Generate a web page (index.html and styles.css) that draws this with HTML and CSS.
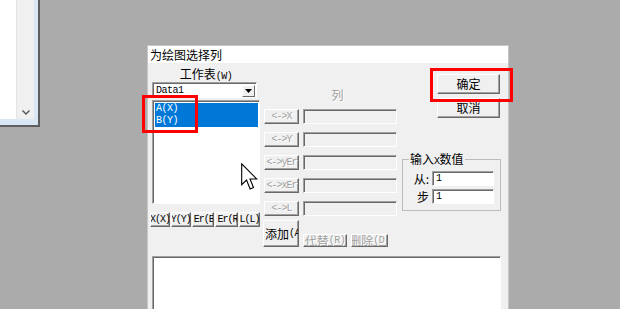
FILE: index.html
```html
<!DOCTYPE html>
<html lang="zh-CN">
<head>
    <meta charset="UTF-8">
    <title>为绘图选择列</title>
    <link rel="stylesheet" href="styles.css">
</head>
<body>
<div class="desk">
    <div class="bgwin">
        <div class="bgwin-in">
            <div class="bgwin-view"></div>
            <div class="bgwin-bar">
                <svg class="chev" width="8" height="5" viewBox="0 0 8 5"><polyline points="0.5,0.5 4,4 7.5,0.5" fill="none" stroke="#555" stroke-width="1.4"/></svg>
            </div>
        </div>
    </div>

    <div class="dlg">
        <div class="dlg-title">为绘图选择列</div>
        <div class="dlg-body">
            <div class="cols">
                <div class="col-left">
                    <div class="cap">工作表<span class="k">(W)</span></div>
                    <div class="combo">
                        <span class="mono">Data1</span>
                        <span class="combo-btn"><svg width="7" height="4" viewBox="0 0 7 4"><polygon points="0,0 7,0 3.5,4" fill="#000"/></svg></span>
                    </div>
                    <div class="list">
                        <div class="item sel">A(X)</div>
                        <div class="item sel">B(Y)</div>
                    </div>
                    <div class="minis">
                        <button class="btn mini w20">X(X)</button>
                        <button class="btn mini w20">Y(Y)</button>
                        <button class="btn mini w23 left">Er(E)</button>
                        <button class="btn mini w23 left">Er(R)</button>
                        <button class="btn mini w21">L(L)</button>
                    </div>
                </div>

                <div class="col-mid">
                    <div class="cap dis col-cap">列</div>
                    <div class="row"><button class="btn arrow dis">&lt;-&gt;X</button><span class="field dis"></span></div>
                    <div class="row"><button class="btn arrow dis">&lt;-&gt;Y</button><span class="field dis"></span></div>
                    <div class="row"><button class="btn arrow dis">&lt;-&gt;yEr</button><span class="field dis"></span></div>
                    <div class="row"><button class="btn arrow dis">&lt;-&gt;xEr</button><span class="field dis"></span></div>
                    <div class="row"><button class="btn arrow dis">&lt;-&gt;L</button><span class="field dis"></span></div>
                    <div class="acts">
                        <button class="btn add">添加<span class="k">(A)</span></button>
                        <button class="btn small dis b-rep">代替<span class="k">(R)</span></button>
                        <button class="btn small dis b-del">删除<span class="k">(D)</span></button>
                    </div>
                </div>

                <div class="col-right">
                    <button class="btn big">确定</button>
                    <button class="btn big">取消</button>
                    <fieldset class="grp">
                        <legend>输入<span class="k">X</span>数值</legend>
                        <div class="grp-row"><label>从:</label><span class="field val">1</span></div>
                        <div class="grp-row"><label>步</label><span class="field val">1</span></div>
                    </fieldset>
                </div>
            </div>
            <div class="memo"></div>
        </div>
    </div>

    <div class="mark mark-list"></div>
    <div class="mark mark-ok"></div>

    <svg class="cursor" width="18" height="28" viewBox="0 0 13 20">
        <path d="M0.5 0.5 L0.5 15.5 L4 12.2 L6.6 18.6 L9 17.6 L6.5 11.4 L11.3 11.4 Z" fill="#fff" stroke="#000" stroke-width="0.8" stroke-linejoin="miter"/>
    </svg>
</div>
</body>
</html>
```

FILE: styles.css
```css
body {
    margin: 0;
    width: 620px;
    height: 309px;
    overflow: hidden;
    background-color: #ababab;
    font-family: "Noto Sans CJK SC", sans-serif;
    font-size: 12px;
    color: #000;
}
.desk {
    position: relative;
    width: 620px;
    height: 309px;
    overflow: hidden;
}

/* window behind, top left */
.bgwin {
    position: absolute;
    left: 0;
    top: 0;
    width: 40px;
    height: 127px;
    box-sizing: border-box;
    background-color: #d9e6f4;
    border-right: 2px solid #5e5e5e;
    border-bottom: 2px solid #5e5e5e;
    padding: 0 4px 6px 0;
}
.bgwin-in {
    display: flex;
    height: 100%;
}
.bgwin-view {
    width: 16px;
    background-color: #fff;
    border-right: 1px solid #e4e4e4;
}
.bgwin-bar {
    flex: 1;
    background-color: #f0f0f0;
    display: flex;
    justify-content: center;
    align-items: flex-end;
    padding-bottom: 4px;
}

/* dialog */
.dlg {
    position: absolute;
    left: 147px;
    top: 45px;
    width: 362px;
    height: 264px;
    box-sizing: border-box;
    background-color: #f0f0f0;
    border: 1px solid #c6c6c6;
    border-bottom: 0;
    overflow: hidden;
}
.dlg-title {
    height: 17px;
    line-height: 17px;
    background-color: #fff;
    padding-left: 2px;
}
.dlg-body {
    padding: 0 7px 0 4px;
}
.cols {
    display: flex;
    align-items: flex-start;
}
.col-left {
    width: 108px;
    display: flex;
    flex-direction: column;
}
.col-mid {
    width: 135px;
    margin-left: 3px;
    display: flex;
    flex-direction: column;
}
.col-right {
    width: 99px;
    margin-left: 5px;
    display: flex;
    flex-direction: column;
}

.cap {
    height: 14px;
    line-height: 14px;
    margin-top: 4px;
    text-align: center;
}
.col-cap {
    margin-top: 26px;
    height: 12px;
    line-height: 12px;
    padding-left: 15px;
}

/* raised buttons */
.btn {
    box-sizing: border-box;
    margin: 0;
    padding: 0;
    font-family: inherit;
    font-size: 12px;
    line-height: 12px;
    color: #000;
    background-color: #f0f0f0;
    border: 1px solid;
    border-color: #fff #696969 #696969 #fff;
    box-shadow: inset -1px -1px 0 #a0a0a0;
    white-space: nowrap;
    overflow: hidden;
    display: flex;
    align-items: center;
    justify-content: center;
}

/* latin text in the old bitmap-font look */
.k, .mono, .item, .arrow, .mini, .val {
    font-family: "Liberation Mono", monospace;
    font-size: 10px;
    letter-spacing: -0.5px;
}

/* sunken boxes */
.combo, .list, .field, .memo {
    box-sizing: border-box;
    border: 1px solid;
    border-color: #a0a0a0 #fff #fff #a0a0a0;
    box-shadow: inset 1px 1px 0 #696969;
    background-color: #fff;
}
.combo {
    width: 105px;
    height: 16px;
    margin-top: 1px;
    display: flex;
    align-items: center;
    justify-content: space-between;
    padding: 1px 1px 0 3px;
}
.combo-btn {
    width: 13px;
    height: 12px;
    box-sizing: border-box;
    background-color: #f0f0f0;
    border: 1px solid;
    border-color: #fff #696969 #696969 #fff;
    display: flex;
    align-items: center;
    justify-content: center;
}
.list {
    height: 104px;
    margin-top: 2px;
    padding: 2px 1px 0 2px;
}
.item {
    height: 12px;
    line-height: 12px;
    padding-left: 1px;
}
.sel {
    background-color: #0078d7;
    color: #fff;
}
.minis {
    display: flex;
    gap: 1px;
    margin: 8px 0 0 -2px;
}
.mini {
    height: 15px;
    letter-spacing: -1px;
}
.mini.left {
    justify-content: flex-start;
    padding-left: 1px;
}
.w20 { width: 20px; }
.w21 { width: 21px; }
.w23 { width: 23px; }

.row {
    display: flex;
    margin-top: 8px;
}
.row:first-of-type {
    margin-top: 2px;
}
.arrow {
    width: 35px;
    height: 15px;
    margin-left: 1px;
    letter-spacing: -1px;
}
.row .field {
    width: 94px;
    height: 15px;
    margin-left: 4px;
}
.field.dis {
    background-color: #f0f0f0;
}

.acts {
    display: flex;
    align-items: flex-end;
    margin-top: 4px;
}
.add {
    width: 36px;
    height: 27px;
    justify-content: flex-start;
    padding-left: 1px;
}
.small {
    height: 13px;
    margin-left: 4px;
}
.b-rep { width: 44px; }
.b-del { width: 37px; }

.big {
    width: 63px;
    height: 20px;
    margin: 11px 0 0 35px;
}
.big + .big {
    margin-top: 4px;
}

/* group box */
.grp {
    margin: 35px 0 0 0;
    padding: 0 6px 6px 6px;
    width: 99px;
    min-width: 0;
    box-sizing: border-box;
    border: 1px solid #bcbcbc;
}
.grp legend {
    padding: 0 1px;
    line-height: 12px;
    height: 12px;
}
.grp-row {
    display: flex;
    justify-content: flex-end;
    align-items: center;
    margin-top: 6px;
}
.grp-row + .grp-row {
    margin-top: 3px;
}
.grp-row label {
    margin-right: 3px;
    line-height: 15px;
}
.val {
    width: 62px;
    height: 15px;
    line-height: 13px;
    padding-left: 3px;
}

.memo {
    margin-top: 9px;
    height: 80px;
}

/* disabled look */
.dis,
.btn.dis {
    color: #a0a0a0;
    text-shadow: 1px 1px 0 #fff;
}
.field.dis {
    text-shadow: none;
}

/* overlays */
.mark {
    position: absolute;
    box-sizing: border-box;
    border: 3px solid #f00;
}
.mark-list {
    left: 142px;
    top: 95px;
    width: 56px;
    height: 38px;
}
.mark-ok {
    left: 430px;
    top: 68px;
    width: 83px;
    height: 34px;
}
.cursor {
    position: absolute;
    left: 241px;
    top: 163px;
}
```
